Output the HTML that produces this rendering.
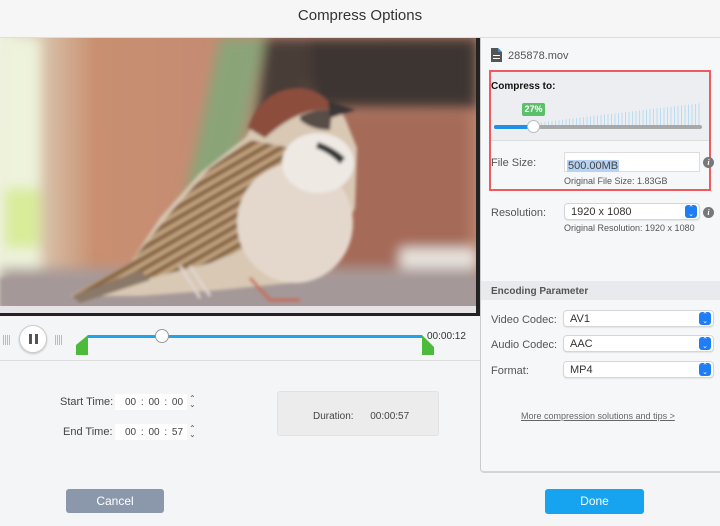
<!DOCTYPE html>
<html><head><meta charset="utf-8"><style>
*{margin:0;padding:0;box-sizing:border-box}
body{width:720px;height:526px;background:#f4f5f7;font-family:"Liberation Sans",sans-serif;position:relative;overflow:hidden;color:#333}
.a{position:absolute}
.t{font-size:11px;color:#444}
.sel{position:absolute;background:#fff;border:1px solid #d6d6d8;border-radius:4px;height:17px;font-size:11px;color:#333;padding:2px 0 0 6px;box-shadow:0 1px 1px rgba(0,0,0,.08)}
.arr{position:absolute;right:2px;top:1px;width:12px;height:13px;background:#1f7ef5;border-radius:3px;color:#fff;font-size:7px;line-height:6px;text-align:center;padding-top:1px}
.info{position:absolute;width:11px;height:11px;border-radius:50%;background:#777;color:#fff;font-size:8px;font-style:italic;font-weight:bold;text-align:center;line-height:11px;font-family:"Liberation Serif",serif}
</style></head><body>
<div class="a" style="left:0;top:0;width:720px;height:38px;background:#f6f6f7;border-bottom:1px solid #ddd"></div>
<div class="a" style="left:0;top:7px;width:720px;text-align:center;font-size:15px;color:#333">Compress Options</div>

<svg class="a" style="left:0;top:38px" width="477" height="276" viewBox="0 0 477 276">
<defs>
<filter id="b"><feGaussianBlur stdDeviation="6"/></filter>
<filter id="b2"><feGaussianBlur stdDeviation="2"/></filter>
<filter id="b1"><feGaussianBlur stdDeviation="1.5"/></filter>
<linearGradient id="g1" x1="0" x2="1"><stop offset="0" stop-color="#eef1e0"/><stop offset=".08" stop-color="#d9c7b0"/><stop offset=".2" stop-color="#c98f70"/><stop offset=".5" stop-color="#c48b74"/><stop offset="1" stop-color="#b8826c"/></linearGradient>
<pattern id="st" width="12" height="9" patternUnits="userSpaceOnUse" patternTransform="rotate(-30)"><rect width="12" height="9" fill="#ad8a62"/><rect y="0" width="12" height="3" fill="#7a5a40"/><rect y="6" width="12" height="1" fill="#dccab0"/></pattern>
</defs>
<rect width="477" height="276" fill="url(#g1)"/>
<g filter="url(#b)">
<rect x="0" y="0" width="40" height="230" fill="#eef3dc"/>
<rect x="5" y="150" width="35" height="60" fill="#d8ec9a"/>
<polygon points="220,0 265,0 215,230 170,230" fill="#8aa478"/>
<polygon points="265,0 320,0 290,130 250,130" fill="#4a3e38"/>
<rect x="310" y="0" width="167" height="70" fill="#3e3630"/>
<rect x="330" y="75" width="140" height="170" fill="#a56a58"/>
<rect x="400" y="210" width="77" height="40" fill="#e8e2dc"/>
<rect x="0" y="230" width="477" height="46" fill="#a89a98"/>
</g>
<g filter="url(#b2)"><rect x="0" y="240" width="477" height="30" fill="#a59898"/></g>
<rect x="0" y="268" width="477" height="8" fill="#e6e4e6"/>
<g filter="url(#b1)">
<path d="M70,258 L130,225 L160,180 L200,135 L245,100 L260,75 Q280,52 305,54 Q330,60 345,80 L357,110 L355,170 L330,220 L290,245 L220,252 L140,258 Z" fill="#d8c8b4"/>
<path d="M70,258 L130,225 L170,175 L210,130 L250,102 L290,110 L300,150 L270,200 L210,225 L150,240 Z" fill="url(#st)"/>
<ellipse cx="295" cy="185" rx="58" ry="60" fill="#e4d8cc"/>
<ellipse cx="318" cy="125" rx="36" ry="30" fill="#efe9e4"/>
<path d="M248,90 Q262,50 300,50 Q328,54 332,72 Q300,68 265,100 Z" fill="#8c4e3c"/>
<path d="M300,78 Q315,70 332,72 L330,92 Q312,92 300,82 Z" fill="#3a302a" opacity=".8"/>
<path d="M328,62 L355,72 L330,80 Z" fill="#3a3636"/>
<path d="M318,104 Q335,110 345,120 L340,126 Q330,115 316,110 Z" fill="#333"/>
<path d="M72,258 L140,232 L150,242 L80,265 Z" fill="#8a7868"/>
<path d="M180,228 L200,260 M190,228 L210,258" stroke="#e0d4d0" stroke-width="3"/>
<path d="M250,240 L270,262 L300,262" stroke="#c86c5c" stroke-width="3" fill="none"/>
</g>
</svg>
<div class="a" style="left:476px;top:38px;width:4px;height:278px;background:#222"></div>
<div class="a" style="left:0;top:313px;width:480px;height:3px;background:#222"></div>

<div class="a" style="left:3px;top:335px;width:8px;height:10px;background:repeating-linear-gradient(90deg,#bbb 0 1px,transparent 1px 2px)"></div>
<div class="a" style="left:55px;top:335px;width:8px;height:10px;background:repeating-linear-gradient(90deg,#bbb 0 1px,transparent 1px 2px)"></div>
<div class="a" style="left:19px;top:325px;width:28px;height:28px;border-radius:50%;background:#fff;border:1px solid #ccc;box-shadow:0 1px 2px rgba(0,0,0,.2)"></div>
<div class="a" style="left:29px;top:334px;width:3px;height:10px;background:#555"></div>
<div class="a" style="left:35px;top:334px;width:3px;height:10px;background:#555"></div>
<div class="a" style="left:88px;top:335px;width:334px;height:3px;background:#1ea4ea"></div>
<svg class="a" style="left:76px;top:335px" width="360" height="22"><path d="M12,0 L12,20 L0,20 L0,10 Z" fill="#4cbb3c"/><path d="M346,0 L346,20 L358,20 L358,12 Z" fill="#4cbb3c"/></svg>
<div class="a" style="left:155px;top:329px;width:14px;height:14px;border-radius:50%;background:#fff;border:1px solid #999"></div>
<div class="a" style="left:427px;top:331px;font-size:10px;color:#333">00:00:12</div>
<div class="a" style="left:0;top:360px;width:480px;height:1px;background:#ddd"></div>

<div class="a t" style="left:60px;top:396px">Start Time:</div>
<div class="a t" style="left:63px;top:426px">End Time:</div>
<div class="a" style="left:115px;top:394px;width:72px;height:16px;background:#fff;font-size:10px;color:#444;padding:3px 0 0 10px;word-spacing:2px">00 : 00 : 00</div>
<div class="a" style="left:115px;top:424px;width:72px;height:16px;background:#fff;font-size:10px;color:#444;padding:3px 0 0 10px;word-spacing:2px">00 : 00 : 57</div>
<div class="a" style="left:189px;top:396px;font-size:8px;color:#555;line-height:6px">⌃<br>⌄</div>
<div class="a" style="left:189px;top:426px;font-size:8px;color:#555;line-height:6px">⌃<br>⌄</div>
<div class="a" style="left:277px;top:391px;width:162px;height:45px;background:#ececed;border:1px solid #e2e2e2;border-radius:3px"></div>
<div class="a" style="left:313px;top:411px;font-size:10px;color:#444">Duration:&nbsp;&nbsp;&nbsp;&nbsp;&nbsp;&nbsp;00:00:57</div>

<div class="a" style="left:480px;top:38px;width:240px;height:435px;background:#f6f7f9;border-left:1px solid #ccc;border-bottom:2px solid #d4d4d6;border-radius:0 0 0 4px"></div>
<svg class="a" style="left:491px;top:48px" width="11" height="14"><path d="M0,0 H7 L11,4 V14 H0 Z" fill="#555"/><path d="M7,0 V4 H11" fill="#2a8ff0"/><rect x="2" y="7" width="7" height="1" fill="#fff"/><rect x="2" y="10" width="7" height="1" fill="#fff"/></svg>
<div class="a" style="left:508px;top:50px;font-size:11px;color:#555">285878.mov</div>
<div class="a" style="left:491px;top:72px;width:218px;height:69px;background:#eceef1;border-bottom:1px solid #ddd"></div>
<div class="a" style="left:489px;top:70px;width:222px;height:121px;border:2px solid #ef5a5f"></div>
<div class="a" style="left:491px;top:81px;font-size:10px;font-weight:bold;color:#111">Compress to:</div>
<svg class="a" style="left:492px;top:100px" width="212" height="28">
<defs><pattern id="bp" width="3.5" height="30" patternUnits="userSpaceOnUse"><rect width="1" height="30" fill="#b9dcf2"/></pattern></defs>
<polygon points="10,27 210,3 210,27" fill="url(#bp)"/>
</svg>
<div class="a" style="left:494px;top:125px;width:208px;height:4px;background:#a8a8aa;border-radius:2px"></div>
<div class="a" style="left:494px;top:125px;width:40px;height:4px;background:#1f8fe8;border-radius:2px"></div>
<div class="a" style="left:527px;top:120px;width:13px;height:13px;border-radius:50%;background:#fff;border:1px solid #bbb"></div>
<div class="a" style="left:522px;top:103px;width:23px;height:13px;background:#5cbf6a;border-radius:2px;color:#fff;font-size:9px;font-weight:bold;text-align:center;line-height:13px">27%</div>
<div class="a" style="left:491px;top:157px;font-size:11px;color:#555">File Size:</div>
<div class="a" style="left:564px;top:152px;width:136px;height:20px;background:#fff;border:1px solid #ddd;padding:3px 0 0 2px"><span style="background:#b6d3f3;font-size:11px;color:#444;padding:0 1px">500.00MB</span></div>
<div class="info" style="left:703px;top:157px">i</div>
<div class="a" style="left:564px;top:176px;font-size:9px;color:#555">Original File Size: 1.83GB</div>

<div class="a" style="left:491px;top:207px;font-size:11px;color:#555">Resolution:</div>
<div class="sel" style="left:564px;top:203px;width:136px">1920 x 1080<div class="arr">⌃<br>⌄</div></div>
<div class="info" style="left:703px;top:207px">i</div>
<div class="a" style="left:564px;top:223px;font-size:9px;color:#555">Original Resolution: 1920 x 1080</div>

<div class="a" style="left:481px;top:281px;width:239px;height:19px;background:#e9eaed"></div>
<div class="a" style="left:491px;top:286px;font-size:10px;font-weight:bold;color:#555">Encoding Parameter</div>
<div class="a" style="left:491px;top:314px;font-size:11px;color:#555">Video Codec:</div>
<div class="sel" style="left:563px;top:310px;width:151px">AV1<div class="arr">⌃<br>⌄</div></div>
<div class="a" style="left:491px;top:339px;font-size:11px;color:#555">Audio Codec:</div>
<div class="sel" style="left:563px;top:335px;width:151px">AAC<div class="arr">⌃<br>⌄</div></div>
<div class="a" style="left:491px;top:365px;font-size:11px;color:#555">Format:</div>
<div class="sel" style="left:563px;top:361px;width:151px">MP4<div class="arr">⌃<br>⌄</div></div>
<div class="a" style="left:521px;top:411px;font-size:9px;color:#666;text-decoration:underline">More compression solutions and tips &gt;</div>

<div class="a" style="left:66px;top:489px;width:98px;height:24px;background:#8b98ac;border-radius:3px;color:#fff;font-size:12px;text-align:center;line-height:24px">Cancel</div>
<div class="a" style="left:545px;top:489px;width:99px;height:25px;background:#16a3ef;border-radius:3px;color:#fff;font-size:12px;text-align:center;line-height:25px">Done</div>
</body></html>
